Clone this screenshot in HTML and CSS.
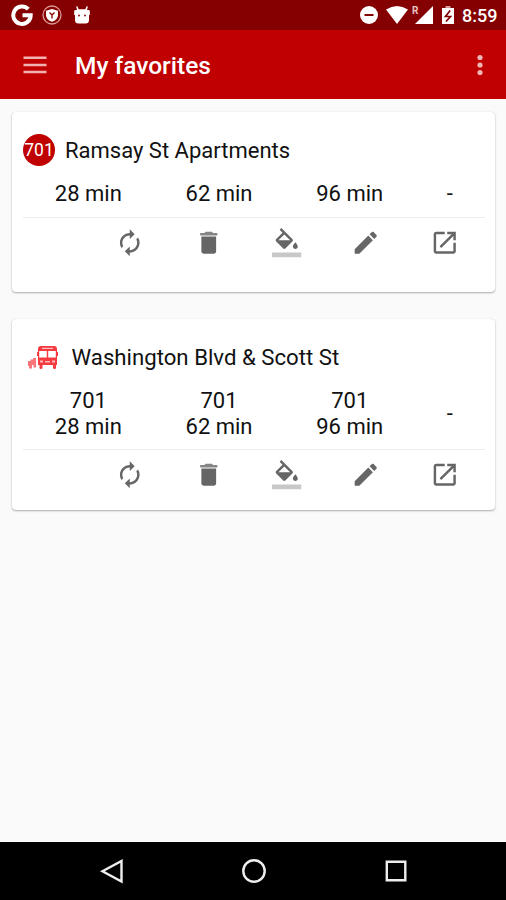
FILE: index.html
```html
<!DOCTYPE html>
<html lang="en">
<head>
<meta charset="utf-8">
<title>My favorites</title>
<link rel="stylesheet" href="styles.css">
</head>
<body>
<svg class="sprite" aria-hidden="true">
  <symbol id="renew" viewBox="0 0 24 24"><path d="M12 6v3l4-4-4-4v3c-4.42 0-8 3.58-8 8 0 1.57.46 3.03 1.24 4.26L6.7 14.8c-.45-.83-.7-1.79-.7-2.8 0-3.31 2.69-6 6-6zm6.76 1.74L17.3 9.2c.44.84.7 1.79.7 2.8 0 3.31-2.69 6-6 6v-3l-4 4 4 4v-3c4.42 0 8-3.58 8-8 0-1.57-.46-3.03-1.24-4.26z"/></symbol>
  <symbol id="trash" viewBox="0 0 24 24"><path d="M6 19c0 1.1.9 2 2 2h8c1.1 0 2-.9 2-2V7H6v12z"/><path opacity=".8" d="M19 4h-3.5l-1-1h-5l-1 1H5v2h14V4z"/></symbol>
  <symbol id="fill" viewBox="0 0 24 24"><path d="M16.56 8.94L7.62 0 6.21 1.41l2.38 2.38-5.15 5.15c-.59.59-.59 1.54 0 2.12l5.5 5.5c.29.29.68.44 1.06.44s.77-.15 1.06-.44l5.5-5.5c.59-.58.59-1.53 0-2.12zM5.21 10L10 5.21 14.79 10H5.21zM19 11.5s-2 2.17-2 3.5c0 1.1.9 2 2 2s2-.9 2-2c0-1.33-2-3.5-2-3.5z"/><path opacity=".36" d="M0 20h24v4H0z"/></symbol>
  <symbol id="edit" viewBox="0 0 24 24"><path d="M3 17.25V21h3.75L17.81 9.94l-3.75-3.75L3 17.25zM20.71 7.04c.39-.39.39-1.02 0-1.41l-2.34-2.34c-.39-.39-1.02-.39-1.41 0l-1.83 1.83 3.75 3.75 1.83-1.83z"/></symbol>
  <symbol id="open" viewBox="0 0 24 24"><path d="M19 19H5V5h7V3H5c-1.11 0-2 .9-2 2v14c0 1.1.89 2 2 2h14c1.1 0 2-.9 2-2v-7h-2v7zM14 3v2h3.59l-9.83 9.83 1.41 1.41L19 6.41V10h2V3h-7z"/></symbol>
</svg>

<div class="status">
  <svg class="g" viewBox="0 0 22 22"><path d="M17.300 5.200A8.700 8.700 0 1 0 19.700 11.200H11.500" fill="none" stroke="#fff" stroke-width="4"/></svg>
  <svg class="shield" viewBox="0 0 20 20"><circle cx="10" cy="10" r="9" fill="none" stroke="#d99" stroke-width="1.300"/><path fill="#fff" d="M10 4l6 1.800v4.400c0 3-2.500 5.200-6 6.600-3.500-1.400-6-3.600-6-6.600V5.800z"/><path d="M7.500 7.500l2.500 2.500 2.500-2.500M10 10v3.500" fill="none" stroke="#850000" stroke-width="1.300"/></svg>
  <svg class="droid" viewBox="0 0 16 18"><path fill="#fff" d="M3.200 0l1.500 3.200h6.600L12.800 0l1 .5-.8 3.500h1.500q1.300 0 1.300 1v4h-.8v5q0 3.500-3.500 3.500h-7Q1 17.500 1 14V9H.2V5q0-1 1.300-1H3L2.200.500z"/><circle cx="5" cy="9.500" r=".9" fill="#850000"/><circle cx="11" cy="9.500" r=".9" fill="#850000"/></svg>
  <span class="spacer"></span>
  <svg class="dnd" viewBox="0 0 18 18"><circle cx="9" cy="9" r="9" fill="#fff"/><path d="M4.500 9h9" stroke="#850000" stroke-width="2"/></svg>
  <svg class="wifi" viewBox="0 0 22 18"><path fill="#fff" d="M0 3.500Q11-3.500 22 3.500L11 18z"/></svg>
  <span class="signal"><span class="roam">R</span><svg viewBox="0 0 18 18"><path fill="#fff" d="M18 0v18H0z"/></svg></span>
  <svg class="battery" viewBox="0 0 12 18"><path fill="#fff" d="M0 2h12v16H0z"/><path fill="#d99" d="M3.500 0h5v2h-5z"/><path d="M8.200 4.500L3.500 10.500h5L4 15.500" fill="none" stroke="#850000" stroke-width="1.700"/></svg>
  <span class="clock">8:59</span>
</div>

<header class="bar">
  <svg class="menu" viewBox="0 0 24 18"><path d="M.500 1.800h23M.500 8.900h23M.500 15.900h23" stroke="#f3b0b0" stroke-width="2.500"/></svg>
  <h1 class="title">My favorites</h1>
  <svg class="more" viewBox="0 0 6 22"><g fill="#f0b5b5"><circle cx="3" cy="3.500" r="2.600"/><circle cx="3" cy="11" r="2.600"/><circle cx="3" cy="18.500" r="2.600"/></g></svg>
</header>

<main class="list">
  <section class="card first">
    <div class="head"><span class="badge">701</span><span class="stop ramsay">Ramsay St Apartments</span></div>
    <div class="times"><span>28 min</span><span>62 min</span><span>96 min</span><span>-</span></div>
    <div class="actions">
      <svg><use href="#renew"/></svg><svg><use href="#trash"/></svg><svg><use href="#fill"/></svg><svg><use href="#edit"/></svg><svg><use href="#open"/></svg>
    </div>
  </section>
  <section class="card second">
    <div class="head">
      <svg class="bus" viewBox="0 0 30 23"><path fill="#f53b40" fill-rule="evenodd" d="M13 0h13q3 0 3 3v3h1v4h-1v9h-1v3q0 1-1.500 1T25 22v-3H14.500v3q0 1-1.500 1t-1.500-1v-3H10V10H9V6h1V3q0-3 3-3z"/><path fill="#fbb" d="M14 1.800h11v1.200H14zM12 14.500h3v2h-3zM24 14.500h3v2h-3zM17 15h5v1.500h-5z"/><path fill="#fff" d="M11.200 5h7.600v6.500h-7.600zM20.200 5h7.600v6.500h-7.600z"/><path fill="#f87579" d="M0 15h2.500v-1.500H5V12h3v9.500H5.500V19H4v3.500H1V20H0z"/></svg>
      <span class="stop">Washington Blvd &amp; Scott St</span>
    </div>
    <div class="times"><span>701<br>28 min</span><span>701<br>62 min</span><span>701<br>96 min</span><span>-</span></div>
    <div class="actions">
      <svg><use href="#renew"/></svg><svg><use href="#trash"/></svg><svg><use href="#fill"/></svg><svg><use href="#edit"/></svg><svg><use href="#open"/></svg>
    </div>
  </section>
</main>

<nav class="nav">
  <svg viewBox="0 0 26 26"><path d="M22.500 3v20.500L3.500 13.200z"/></svg>
  <svg viewBox="0 0 26 26"><circle cx="13" cy="13" r="10.700"/></svg>
  <svg viewBox="0 0 26 26"><path d="M3.800 3.800h18.500v18.500H3.800z"/></svg>
</nav>
</body>
</html>
```

FILE: styles.css
```css
* { box-sizing: border-box; }
body {
  margin: 0;
  height: 900px;
  display: flex;
  flex-direction: column;
  background: #fafafa;
  color: #111;
  font-family: Roboto, "Liberation Sans", sans-serif;
  overflow: hidden;
}
svg { display: block; flex: none; }
.sprite { display: none; }

.status {
  height: 30px;
  flex: none;
  display: flex;
  align-items: center;
  padding: 0 9px 0 11px;
  background: #850000;
}
.g { width: 22px; height: 22px; }
.shield { width: 20px; height: 20px; margin-left: 9px; }
.droid { width: 16px; height: 18px; margin-left: 12px; }
.spacer { flex: 1; }
.dnd { width: 18px; height: 18px; }
.wifi { width: 22px; height: 18px; margin-left: 8px; }
.signal { display: flex; margin-left: 4px; }
.signal svg { width: 18px; height: 18px; margin-left: -4px; }
.roam { width: 7px; font: 700 10px/10px Roboto, sans-serif; color: #e8c4c4; }
.battery { width: 12px; height: 18px; margin-left: 9px; }
.clock {
  width: 35px;
  margin: 2px 0 0 8px;
  font-size: 18px;
  font-weight: 500;
  line-height: 30px;
  color: #fff;
  white-space: nowrap;
}

.bar {
  height: 69px;
  flex: none;
  display: flex;
  align-items: center;
  padding: 0 23px;
  background: #c00000;
}
.menu { width: 24px; height: 18px; }
.title {
  flex: 1;
  margin: 2px 0 0 28px;
  font-size: 24.500px;
  font-weight: 500;
  line-height: 30px;
  color: #fff;
}
.more { width: 6px; height: 22px; }

.list {
  flex: 1;
  display: flex;
  flex-direction: column;
  gap: 27px;
  padding: 13px 11px 0 12px;
}
.card {
  padding: 22px 10.500px 0 11px;
  background: #fff;
  border-radius: 4px;
  box-shadow: 0 1px 2px rgba(0, 0, 0, .3), 0 0 1px rgba(0, 0, 0, .15);
}
.first { height: 180px; }
.second { height: 191px; }
.head { display: flex; align-items: center; height: 33px; }
.badge {
  width: 32px;
  height: 32px;
  margin-top: -1px;
  border-radius: 50%;
  background: #c00000;
  color: #fff;
  font-size: 17.500px;
  line-height: 33px;
  text-align: center;
}
.stop { font-size: 22.200px; line-height: 30px; margin: -1px 0 0 13.500px; white-space: nowrap; }
.ramsay { margin: 1px 0 0 10px; font-size: 22px; }
.bus { width: 30px; height: 23px; margin-left: 5px; }
.times {
  display: grid;
  grid-template-columns: 130.700px 130.700px 130.700px 1fr;
  align-items: center;
  height: 51px;
  padding-top: 4px;
  border-bottom: 1px solid #ececec;
  font-size: 22px;
  line-height: 26px;
  text-align: center;
}
.second .times { height: 76px; }
.actions {
  display: grid;
  grid-template-columns: repeat(5, 1fr);
  justify-items: center;
  align-items: center;
  height: 50px;
  margin: 0 0 0 67px;
  fill: #666;
}
.actions svg { width: 29.500px; height: 29.500px; }

.nav {
  height: 58px;
  flex: none;
  display: flex;
  justify-content: center;
  align-items: center;
  gap: 116px;
  padding-left: 2px;
  background: #000;
  fill: none;
  stroke: #eee;
  stroke-width: 2.400;
}
.nav svg { width: 26px; height: 26px; }
```
